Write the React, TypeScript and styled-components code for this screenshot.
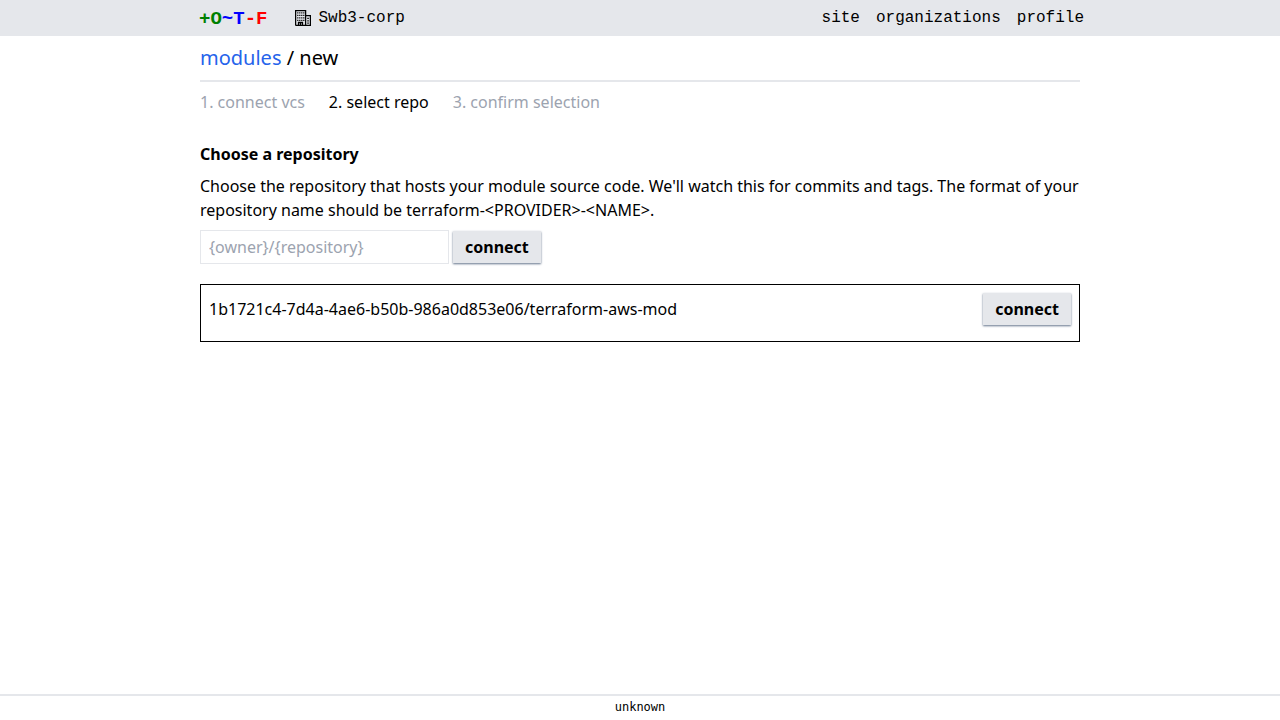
import React from "react";
import styled, { createGlobalStyle } from "styled-components";

const GlobalStyle = createGlobalStyle`
  *, *::before, *::after { box-sizing: border-box; }
  body { margin: 0; background: #fff; color: #000; font: 16px/24px "Noto Sans", sans-serif; }
  h3, p, ol { margin: 0; padding: 0; }
  a { color: inherit; text-decoration: none; }
`;

const Page = styled.div`
  display: flex;
  flex-direction: column;
  min-height: 100vh;
`;

const Header = styled.header`
  background: #e5e7eb;
  font-family: "Liberation Mono", monospace;
`;

const HeaderInner = styled.div`
  display: flex;
  align-items: center;
  justify-content: space-between;
  max-width: 888px;
  height: 36px;
  margin: 0 auto;
  padding: 0 0 0 3px;
`;

const HeaderGroup = styled.div`
  display: flex;
  align-items: center;
  gap: 28px;
`;

const Logo = styled.a`
  padding-top: 2px;
  font-size: 19px;
  font-weight: 700;
`;

const LogoPart = styled.span<{ $color: string }>`
  color: ${(p) => p.$color};
`;

const OrgLink = styled.a`
  display: flex;
  align-items: center;
  gap: 7px;
`;

const Nav = styled.nav`
  display: flex;
  gap: 16px;
`;

const Main = styled.main`
  flex: 1;
  width: 100%;
  max-width: 880px;
  margin: 0 auto;
`;

const Breadcrumbs = styled.nav`
  padding: 8px 0;
  border-bottom: 2px solid #e5e7eb;
  font-size: 20px;
  line-height: 28px;
`;

const CrumbLink = styled.a`
  color: #2563eb;
`;

const Steps = styled.ol`
  display: flex;
  gap: 24px;
  margin: 8px 0 28px;
  list-style: none;
`;

const Step = styled.li<{ $active?: boolean }>`
  color: ${(p) => (p.$active ? "#000" : "#9ca3af")};
`;

const Title = styled.h3`
  margin-bottom: 8px;
  font-size: 16px;
  font-weight: 700;
`;

const ConnectForm = styled.form`
  display: flex;
  align-items: center;
  gap: 4px;
  margin: 8px 0 20px;
`;

const RepoInput = styled.input`
  width: 249px;
  height: 34px;
  padding: 0 8px;
  border: 1px solid #e5e7eb;
  background: #fff;
  font: inherit;
  &::placeholder { color: #9ca3af; opacity: 1; }
`;

const Button = styled.button`
  height: 32px;
  padding: 0 12px;
  border: 0;
  background: #e5e7eb;
  color: #000;
  font: inherit;
  font-weight: 700;
  box-shadow: 0 1px 2px 0 #64748b;
  cursor: pointer;
`;

const RepoRow = styled.div`
  display: flex;
  align-items: center;
  justify-content: space-between;
  padding: 8px 8px 16px;
  border: 1px solid #000;
`;

const Footer = styled.footer`
  border-top: 2px solid #e5e7eb;
  padding: 3px 0 5px;
  text-align: center;
  font: 12px/16px "DejaVu Sans Mono", monospace;
`;

const BuildingIcon = () => (
  <svg width="16" height="16" viewBox="0 0 16 16" fill="none" aria-hidden="true">
    <path d="M.6 15.4V.6h10v14.8M10.6 5.6h4.8v9.8H.6" stroke="#000" strokeWidth="1.3" />
    <path
      d="M2.2 2.2h1.2v1.2H2.2zM4.2 2.2h1.2v1.2H4.2zM6.2 2.2h1.2v1.2H6.2zM8.2 2.2h1.2v1.2H8.2zM2.2 4.7h1.2v1.2H2.2zM4.2 4.7h1.2v1.2H4.2zM6.2 4.7h1.2v1.2H6.2zM8.2 4.7h1.2v1.2H8.2zM2.2 7.2h1.2v1.2H2.2zM4.2 7.2h1.2v1.2H4.2zM6.2 7.2h1.2v1.2H6.2zM8.2 7.2h1.2v1.2H8.2zM2.2 9.7h1.2v1.2H2.2zM4.2 9.7h1.2v1.2H4.2zM6.2 9.7h1.2v1.2H6.2zM8.2 9.7h1.2v1.2H8.2zM12.3 7.8h1.5v1.2h-1.5zM12.3 10.2h1.5v1.2h-1.5zM12.3 12.6h1.5v1.2h-1.5z"
      fill="#000"
    />
    <path d="M3.5 15.5v-3h4v3M5.5 12.5v3" stroke="#000" strokeWidth="1.3" />
  </svg>
);

export default function App() {
  return (
    <Page>
      <GlobalStyle />
      <Header>
        <HeaderInner>
          <HeaderGroup>
            <Logo href="#">
              <LogoPart $color="green">+O</LogoPart>
              <LogoPart $color="blue">~T</LogoPart>
              <LogoPart $color="red">-F</LogoPart>
            </Logo>
            <OrgLink href="#">
              <BuildingIcon />
              <span>Swb3-corp</span>
            </OrgLink>
          </HeaderGroup>
          <Nav aria-label="Main">
            <a href="#">site</a>
            <a href="#">organizations</a>
            <a href="#">profile</a>
          </Nav>
        </HeaderInner>
      </Header>
      <Main>
        <Breadcrumbs aria-label="Breadcrumb">
          <CrumbLink href="#">modules</CrumbLink> / new
        </Breadcrumbs>
        <Steps>
          <Step>1. connect vcs</Step>
          <Step $active aria-current="step">2. select repo</Step>
          <Step>3. confirm selection</Step>
        </Steps>
        <Title>Choose a repository</Title>
        <p>
          {"Choose the repository that hosts your module source code. We'll watch this for commits and tags. The format of your repository name should be terraform-<PROVIDER>-<NAME>."}
        </p>
        <ConnectForm onSubmit={(e) => e.preventDefault()}>
          <RepoInput type="text" name="identifier" aria-label="Repository" placeholder="{owner}/{repository}" />
          <Button type="submit">connect</Button>
        </ConnectForm>
        <RepoRow>
          <span>1b1721c4-7d4a-4ae6-b50b-986a0d853e06/terraform-aws-mod</span>
          <Button type="button">connect</Button>
        </RepoRow>
      </Main>
      <Footer>unknown</Footer>
    </Page>
  );
}
